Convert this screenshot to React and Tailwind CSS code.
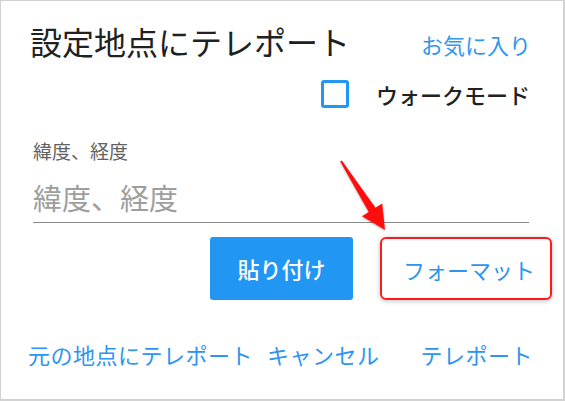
import React from "react";

const jp = { fontFamily: '"Noto Sans CJK JP", "Noto Sans", sans-serif' };

export default function App() {
  return (
    <div
      style={jp}
      className="relative h-[401px] w-[565px] overflow-hidden border-l border-t border-r-2 border-b-2 border-[#d2d2d2] bg-white"
    >
      <div className="flex items-start justify-between pl-[29px] pr-[32px] pt-[20px]">
        <h1 className="text-[32px] leading-[40px] text-[#212121]">設定地点にテレポート</h1>
        <button className="mt-[9px] text-[22px] leading-[28px] text-[#3197ee]">お気に入り</button>
      </div>

      <div className="mt-[19px] flex h-[28px] items-center justify-end pr-[33px]">
        <span className="h-[28px] w-[28px] rounded-[3px] border-[3px] border-[#2196f3]" />
        <span className="ml-[27px] text-[22px] font-medium leading-[28px] text-[#212121]">ウォークモード</span>
      </div>

      <div className="mt-[31px] pl-[32px] pr-[34px]">
        <label className="block text-[19px] leading-[24px] text-[#616161]">緯度、経度</label>
        <div className="mt-[16px] border-b-[1.5px] border-[#8a8a8a] pb-[7px] text-[29px] leading-[36px] text-[#9e9e9e]">
          緯度、経度
        </div>
      </div>

      <div className="mt-[14px] flex items-center justify-end pr-[11px]">
        <button className="h-[63px] w-[143px] rounded-[3px] bg-[#2196f3] text-[22px] font-medium text-white">
          貼り付け
        </button>
        <div className="ml-[27px] flex h-[63px] w-[172px] items-center justify-center rounded-[6px] border-2 border-[#ff1a1a] pl-[6px] shadow-[0_1px_5px_rgba(0,0,0,0.25)]">
          <span className="text-[22px] leading-[28px] text-[#2d95ef]">フォーマット</span>
        </div>
      </div>

      <div className="mt-[40px] flex items-center pl-[27px] pr-[30px] text-[22px] leading-[28px] tracking-[0.5px] text-[#2d95ef]">
        <span>元の地点にテレポート</span>
        <span className="ml-[14px]">キャンセル</span>
        <span className="ml-auto">テレポート</span>
      </div>

      <svg className="pointer-events-none absolute left-0 top-0" width="565" height="401">
        <defs>
          <filter id="sh" x="-20%" y="-20%" width="140%" height="140%">
            <feDropShadow dx="0" dy="1" stdDeviation="1.2" floodColor="#000" floodOpacity="0.3" />
          </filter>
        </defs>
        <polygon
          filter="url(#sh)"
          fill="#ff0d0d"
          points="339.2,160.5 340.8,159.5 374.5,206.7 381.2,202.4 384,229 361,215.2 367.7,210.9"
        />
      </svg>
    </div>
  );
}
